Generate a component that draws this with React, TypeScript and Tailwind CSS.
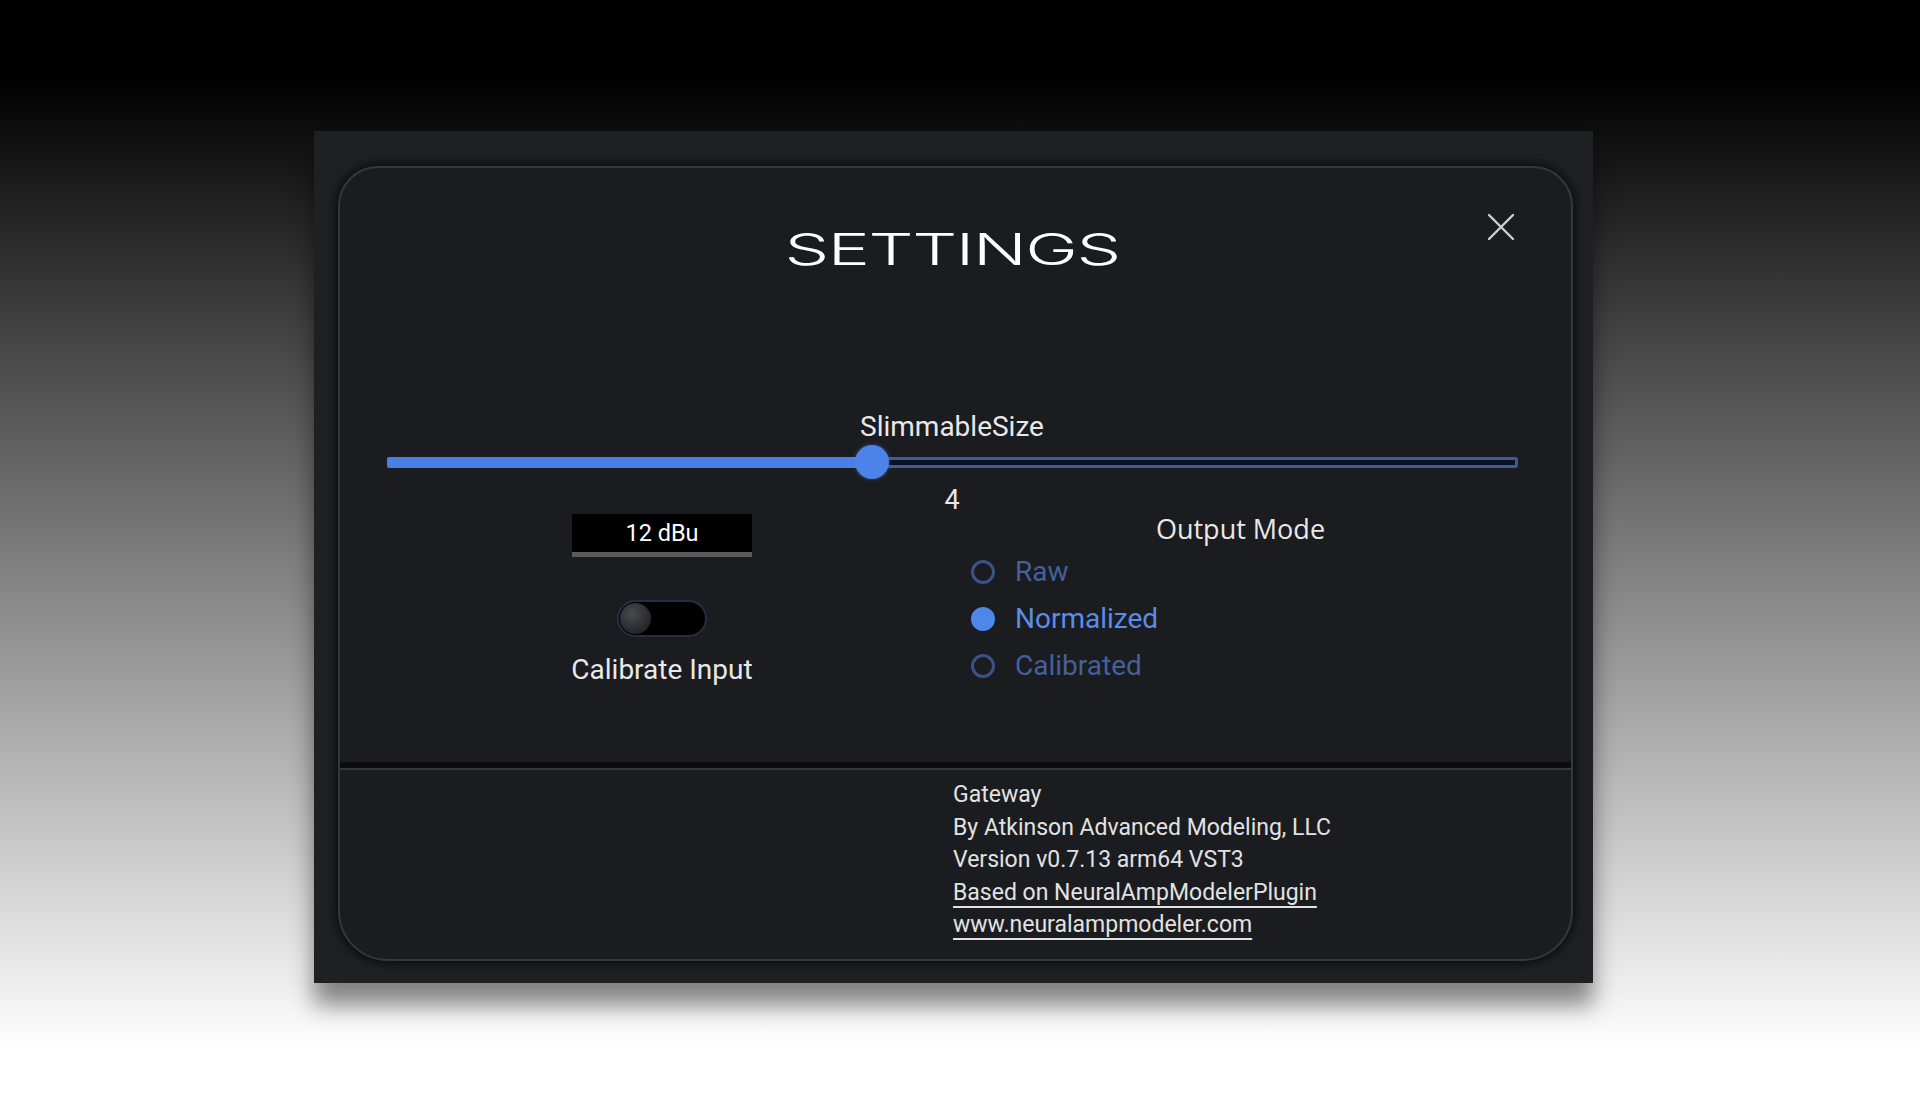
import React from "react";

const modes = [
  { label: "Raw", selected: false },
  { label: "Normalized", selected: true },
  { label: "Calibrated", selected: false },
];

function CloseIcon() {
  return (
    <svg width="28" height="28" viewBox="0 0 28 28" fill="none">
      <path d="M2 2 L26 26 M26 2 L2 26" stroke="#cfcfd1" strokeWidth="2.4" strokeLinecap="round" />
    </svg>
  );
}

function Slider() {
  return (
    <div className="ml-[47px] mr-[53px] mt-[3px] flex h-[34px] items-center">
      <div className="h-[11px] w-[485px] rounded-l-[2px] bg-[#4a7fe6]" />
      <div className="z-10 -mx-[17px] h-[34px] w-[34px] shrink-0 rounded-full bg-[#4d82e8] shadow-[0_0_4px_rgba(77,130,232,0.5)]" />
      <div className="h-[11px] flex-1 rounded-r-[3px] border-[3px] border-[#3f5c96] bg-[#0c1222]" />
    </div>
  );
}

function Toggle() {
  return (
    <div className="mt-[43px] flex h-[37px] w-[90px] items-center rounded-full border-2 border-[#262e46] bg-black px-[1px]">
      <div className="h-[31px] w-[31px] rounded-full bg-[radial-gradient(circle_at_40%_35%,#4a4b4f_0%,#2a2b2e_60%,#1a1a1c_100%)]" />
    </div>
  );
}

function RadioRow({ label, selected }: { label: string; selected: boolean }) {
  return (
    <div className="flex h-[47px] items-center gap-[20px]">
      {selected ? (
        <div className="h-[24px] w-[24px] rounded-full bg-[#4f86ea]" />
      ) : (
        <div className="h-[24px] w-[24px] rounded-full border-[3.5px] border-[#3a5286]" />
      )}
      <span className={selected ? "text-[28px] leading-[30px] text-[#5a8ce8]" : "text-[28px] leading-[30px] text-[#45609a]"}>
        {label}
      </span>
    </div>
  );
}

export default function App() {
  return (
    <div className="min-h-[1106px] w-full bg-[linear-gradient(to_bottom,#000_0%,#000_7%,#fff_95%)] pl-[314px] pt-[131px] font-['Roboto','Liberation_Sans',sans-serif]">
      <div className="flex h-[852px] w-[1279px] flex-col bg-[#1f2023] pb-[22px] pl-[24px] pr-[20px] pt-[35px] shadow-[0_22px_22px_rgba(0,0,0,0.45)]">
        <div className="relative flex h-full flex-col overflow-hidden rounded-b-[50px] rounded-t-[40px] border-2 border-[#36373c] bg-[#1b1c1f] shadow-[0_0_8px_3px_rgba(0,0,0,0.6)]">
          {/* top section */}
          <div className="flex h-[594px] flex-col">
            <button className="absolute right-[56px] top-[45px]">
              <CloseIcon />
            </button>
            <div className="mt-[57px] h-[48px] pr-[7px] text-center">
              <span className="inline-block scale-x-[1.61] font-['Inter',sans-serif] text-[44px] font-light leading-[48px] tracking-[-0.02em] text-white">
                SETTINGS
              </span>
            </div>
            <div className="mt-[139px] pr-[7px] text-center text-[28px] leading-[30px] text-[#e8e8e8]">SlimmableSize</div>
            <Slider />
            <div className="mt-[7px] pr-[7px] text-center text-[27px] leading-[28px] text-[#e8e8e8]">4</div>
            <div className="flex">
              <div className="ml-[231px] flex w-[182px] flex-col items-center">
                <div className="h-[43px] w-[180px] border-b-[5px] border-[#5a5b5f] bg-black text-center text-[23.5px] leading-[38px] text-white">
                  12 dBu
                </div>
                <Toggle />
                <div className="mt-[18px] whitespace-nowrap text-[28px] leading-[30px] text-[#e8e8e8]">Calibrate Input</div>
              </div>
              <div className="ml-[218px] flex w-[539px] flex-col">
                <div className="text-center font-['Open_Sans',sans-serif] text-[27px] leading-[30px] text-[#e8e8e8]">
                  Output Mode
                </div>
                <div className="mt-[4px] flex flex-col">
                  {modes.map((m) => (
                    <RadioRow key={m.label} label={m.label} selected={m.selected} />
                  ))}
                </div>
              </div>
            </div>
          </div>
          {/* divider */}
          <div className="h-[6px] bg-[#0c0c0e]" />
          <div className="h-[2px] bg-[#36373b]" />
          {/* footer */}
          <div className="flex-1 pl-[613px] pt-[9px] text-[23px] leading-[32.5px] text-[#e2e2e2]">
            <div>Gateway</div>
            <div>By Atkinson Advanced Modeling, LLC</div>
            <div>Version v0.7.13 arm64 VST3</div>
            <div className="underline decoration-2 underline-offset-[6px]">Based on NeuralAmpModelerPlugin</div>
            <div className="underline decoration-2 underline-offset-[6px]">www.neuralampmodeler.com</div>
          </div>
        </div>
      </div>
    </div>
  );
}
